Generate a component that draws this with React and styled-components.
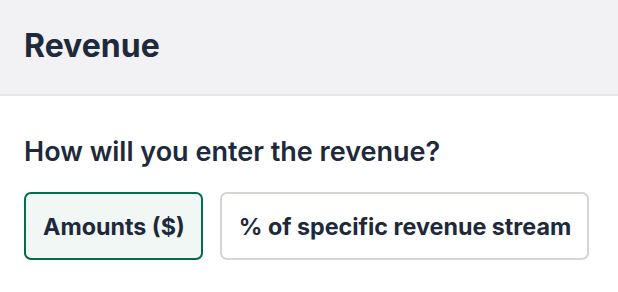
import React, { useState } from "react";
import styled, { createGlobalStyle } from "styled-components";

const GlobalStyle = createGlobalStyle`
  html, body { margin: 0; padding: 0; background: #ffffff; }
  body { font-family: "Inter", "Liberation Sans", sans-serif; color: #1e293b; }
  * { box-sizing: border-box; }
`;

const Panel = styled.section`
  width: 618px;
  min-height: 292px;
  background: #ffffff;
`;

const Header = styled.header`
  height: 96px;
  display: flex;
  align-items: center;
  padding: 0 24px 3px 24px;
  background: #f2f2f5;
  border-bottom: 2px solid #e6e6ea;
`;

const Title = styled.h2`
  margin: 0;
  font-size: 32px;
  line-height: 38px;
  font-weight: 700;
  color: #1e293b;
`;

const Body = styled.div`
  padding: 37px 24px 0 24px;
  display: flex;
  flex-direction: column;
  gap: 21px;
`;

const Question = styled.h3`
  margin: 0;
  font-size: 27px;
  line-height: 38px;
  font-weight: 600;
  color: #1e293b;
`;

const Options = styled.div`
  display: flex;
  gap: 17px;
`;

const Option = styled.button`
  height: 68px;
  padding: 0 16px 0 17px;
  display: flex;
  align-items: center;
  border-radius: 7px;
  font-family: inherit;
  font-size: 23.3px;
  font-weight: 700;
  color: #1e293b;
  cursor: pointer;
  white-space: nowrap;
  background: ${(p) => (p.$active ? "#f1f7f5" : "#ffffff")};
  border: ${(p) => (p.$active ? "2.5px solid #006d4e" : "2px solid #d4d5da")};
`;

const options = ["Amounts ($)", "% of specific revenue stream"];

export default function App() {
  const [selected, setSelected] = useState(0);
  return (
    <>
      <GlobalStyle />
      <Panel>
        <Header>
          <Title>Revenue</Title>
        </Header>
        <Body>
          <Question>How will you enter the revenue?</Question>
          <Options>
            {options.map((label, i) => (
              <Option key={label} $active={selected === i} onClick={() => setSelected(i)}>
                {label}
              </Option>
            ))}
          </Options>
        </Body>
      </Panel>
    </>
  );
}
